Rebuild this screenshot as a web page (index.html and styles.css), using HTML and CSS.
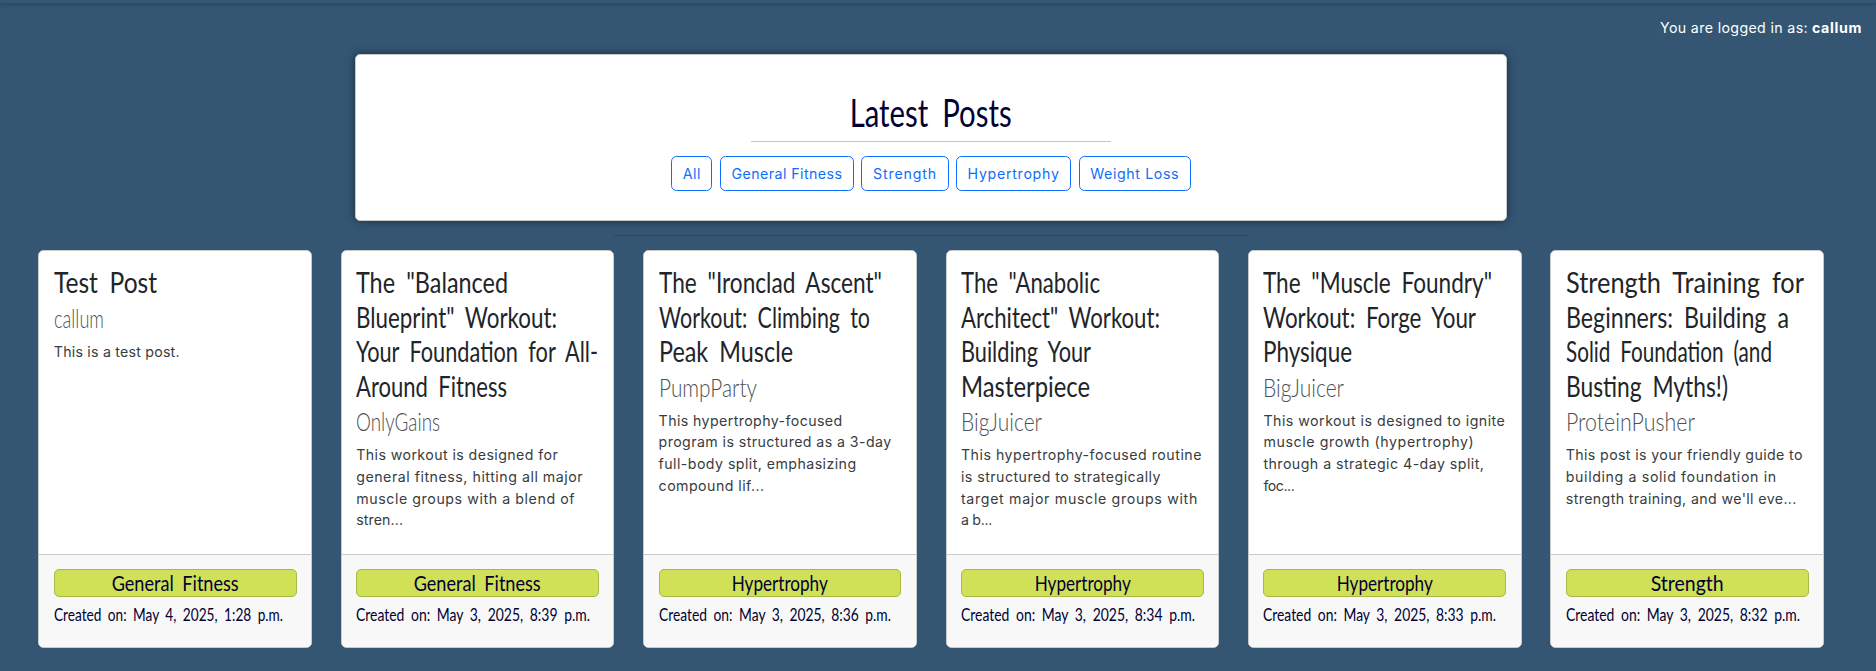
FILE: index.html
```
<!DOCTYPE html>
<html lang="en">
<head>
<meta charset="utf-8">
<title>Latest Posts</title>
<link rel="stylesheet" href="styles.css">
</head>
<body>
<div class="topbar"></div>
<p class="login"><span class="sans" data-w="148">You are logged in as:</span> <strong class="sans" data-w="50">callum</strong></p>

<section class="hero">
  <h1 class="hero-title"><span class="hand" data-w="162">Latest Posts</span></h1>
  <hr class="hero-rule">
  <nav class="filters">
    <a class="btn"><span class="sans" data-w="18">All</span></a>
    <a class="btn"><span class="sans" data-w="111">General Fitness</span></a>
    <a class="btn"><span class="sans" data-w="64">Strength</span></a>
    <a class="btn"><span class="sans" data-w="92">Hypertrophy</span></a>
    <a class="btn"><span class="sans" data-w="89">Weight Loss</span></a>
  </nav>
</section>
<hr class="divider">

<main class="posts">
  <article class="card">
    <div class="card-body">
      <h2 class="title"><span class="hand" data-w="103">Test Post</span></h2>
      <h3 class="author"><span class="hand" data-w="50">callum</span></h3>
      <p class="excerpt"><span class="sans" data-w="126">This is a test post.</span></p>
    </div>
    <footer class="card-footer">
      <div class="badge"><span class="hand" data-w="127">General Fitness</span></div>
      <p class="date"><span class="hand" data-w="229">Created on: May 4, 2025, 1:28 p.m.</span></p>
    </footer>
  </article>
  <article class="card">
    <div class="card-body">
      <h2 class="title"><span class="hand" data-w="152">The "Balanced</span> <span class="hand" data-w="201">Blueprint" Workout:</span> <span class="hand" data-w="242">Your Foundation for All-</span> <span class="hand" data-w="151">Around Fitness</span></h2>
      <h3 class="author"><span class="hand" data-w="84">OnlyGains</span></h3>
      <p class="excerpt"><span class="sans" data-w="202">This workout is designed for</span> <span class="sans" data-w="227">general fitness, hitting all major</span> <span class="sans" data-w="219">muscle groups with a blend of</span> <span class="sans" data-w="47">stren...</span></p>
    </div>
    <footer class="card-footer">
      <div class="badge"><span class="hand" data-w="127">General Fitness</span></div>
      <p class="date"><span class="hand" data-w="234">Created on: May 3, 2025, 8:39 p.m.</span></p>
    </footer>
  </article>
  <article class="card">
    <div class="card-body">
      <h2 class="title"><span class="hand" data-w="223">The "Ironclad Ascent"</span> <span class="hand" data-w="211">Workout: Climbing to</span> <span class="hand" data-w="134">Peak Muscle</span></h2>
      <h3 class="author"><span class="hand" data-w="98">PumpParty</span></h3>
      <p class="excerpt"><span class="sans" data-w="184">This hypertrophy-focused</span> <span class="sans" data-w="233">program is structured as a 3-day</span> <span class="sans" data-w="198">full-body split, emphasizing</span> <span class="sans" data-w="106">compound lif...</span></p>
    </div>
    <footer class="card-footer">
      <div class="badge"><span class="hand" data-w="96">Hypertrophy</span></div>
      <p class="date"><span class="hand" data-w="232">Created on: May 3, 2025, 8:36 p.m.</span></p>
    </footer>
  </article>
  <article class="card">
    <div class="card-body">
      <h2 class="title"><span class="hand" data-w="139">The "Anabolic</span> <span class="hand" data-w="199">Architect" Workout:</span> <span class="hand" data-w="130">Building Your</span> <span class="hand" data-w="129">Masterpiece</span></h2>
      <h3 class="author"><span class="hand" data-w="81">BigJuicer</span></h3>
      <p class="excerpt"><span class="sans" data-w="241">This hypertrophy-focused routine</span> <span class="sans" data-w="200">is structured to strategically</span> <span class="sans" data-w="237">target major muscle groups with</span> <span class="sans" data-w="31">a b...</span></p>
    </div>
    <footer class="card-footer">
      <div class="badge"><span class="hand" data-w="96">Hypertrophy</span></div>
      <p class="date"><span class="hand" data-w="234">Created on: May 3, 2025, 8:34 p.m.</span></p>
    </footer>
  </article>
  <article class="card">
    <div class="card-body">
      <h2 class="title"><span class="hand" data-w="229">The "Muscle Foundry"</span> <span class="hand" data-w="213">Workout: Forge Your</span> <span class="hand" data-w="89">Physique</span></h2>
      <h3 class="author"><span class="hand" data-w="81">BigJuicer</span></h3>
      <p class="excerpt"><span class="sans" data-w="242">This workout is designed to ignite</span> <span class="sans" data-w="211">muscle growth (hypertrophy)</span> <span class="sans" data-w="221">through a strategic 4-day split,</span> <span class="sans" data-w="31">foc...</span></p>
    </div>
    <footer class="card-footer">
      <div class="badge"><span class="hand" data-w="96">Hypertrophy</span></div>
      <p class="date"><span class="hand" data-w="233">Created on: May 3, 2025, 8:33 p.m.</span></p>
    </footer>
  </article>
  <article class="card">
    <div class="card-body">
      <h2 class="title"><span class="hand" data-w="238">Strength Training for</span> <span class="hand" data-w="223">Beginners: Building a</span> <span class="hand" data-w="206">Solid Foundation (and</span> <span class="hand" data-w="162">Busting Myths!)</span></h2>
      <h3 class="author"><span class="hand" data-w="129">ProteinPusher</span></h3>
      <p class="excerpt"><span class="sans" data-w="237">This post is your friendly guide to</span> <span class="sans" data-w="211">building a solid foundation in</span> <span class="sans" data-w="231">strength training, and we'll eve...</span></p>
    </div>
    <footer class="card-footer">
      <div class="badge"><span class="hand" data-w="73">Strength</span></div>
      <p class="date"><span class="hand" data-w="234">Created on: May 3, 2025, 8:32 p.m.</span></p>
    </footer>
  </article>
</main>
<script src="fit.js"></script>
</body>
</html>
```

FILE: styles.css
```
* { box-sizing: border-box; }

body {
  margin: 0;
  padding-right: 14px;
  height: 671px;
  overflow: hidden;
  background: #345673;
  color: #212529;
  font-family: "Inter", "Open Sans", sans-serif;
  font-size: 14.2px;
  line-height: 21.8px;
}

h1, h2, h3, p, hr { margin: 0; border: 0; font-weight: 400; }

.topbar {
  height: 3px;
  margin-right: -14px;
  background: #345777;
  box-shadow: 0 1px 4px rgba(0, 0, 0, .3);
}

.login {
  display: flex;
  justify-content: flex-end;
  gap: 4px;
  padding: 14px 0 0;
  height: 51px;
  color: #fff;
}
.login strong { font-weight: 700; }

.sans { white-space: nowrap; }

.hand {
  display: inline-block;
  white-space: nowrap;
  word-spacing: .22em;
  transform-origin: 0 50%;
  font-family: "Lato", "Open Sans", sans-serif;
}

.hero {
  width: 1152px;
  height: 167px;
  margin: 0 auto;
  padding-top: 37px;
  background: #fff;
  border: 1px solid #c8cacc;
  border-radius: 5px;
  box-shadow: 0 0 8px rgba(0, 0, 0, .5);
}
.hero-title {
  display: flex;
  justify-content: center;
  height: 49px;
  font-size: 39px;
  line-height: 41px;
  color: #000033;
}
.hero-title .hand, .badge .hand { transform-origin: 50% 50%; }
.hero-rule {
  width: 360px;
  height: 1px;
  margin: 0 auto;
  background: #c4c5c7;
}
.filters {
  display: flex;
  justify-content: center;
  gap: 7.4px;
  margin-top: 14px;
}
.btn {
  padding: 6px 10.6px;
  height: 35px;
  border: 1px solid #0d6efd;
  border-radius: 5.5px;
  color: #0d6efd;
}

.divider {
  width: 634px;
  height: 1px;
  margin: 14px auto;
  background: #2b485f;
}

.posts {
  display: grid;
  grid-template-columns: repeat(6, 1fr);
  gap: 28.8px;
  padding: 0 38px 0 38.4px;
}
.card {
  display: flex;
  flex-direction: column;
  min-width: 0;
  height: 398px;
  border: 1px solid #c8cacc;
  border-radius: 5.5px;
  background: #fff;
  overflow: hidden;
}
.card-body { flex: 1; padding: 14px 14.4px; }
.title {
  font-size: 29px;
  line-height: 34.5px;
}
.title .hand { display: block; width: max-content; }
.author {
  height: 41px;
  padding-top: 4px;
  font-size: 25px;
  line-height: 28.8px;
  font-weight: 300;
  color: #4c5155;
}
.excerpt { color: #383c40; }
.excerpt .sans { display: block; width: max-content; }

.card-footer {
  height: 93px;
  padding: 14px 14.4px;
  border-top: 1px solid #c8cacc;
  background: #f8f8f8;
  color: #000033;
}
.badge {
  display: flex;
  justify-content: center;
  height: 28px;
  border: 1px solid #a9b945;
  border-radius: 5px;
  background: #d0e057;
  font-size: 22px;
  line-height: 25px;
}
.date {
  margin-top: 5px;
  font-size: 18px;
  line-height: 24px;
}
```

FILE: fit.js
```
// Fit each line of text to its set width: script-style lines are condensed, body lines are tracked.
document.querySelectorAll('[data-w]').forEach(function (el) {
  var target = Number(el.dataset.w);
  var width = el.getBoundingClientRect().width;
  if (el.classList.contains('hand')) {
    el.style.transform = 'scaleX(' + target / width + ')';
  } else {
    el.style.letterSpacing = (target - width) / el.textContent.length + 'px';
  }
});
```
